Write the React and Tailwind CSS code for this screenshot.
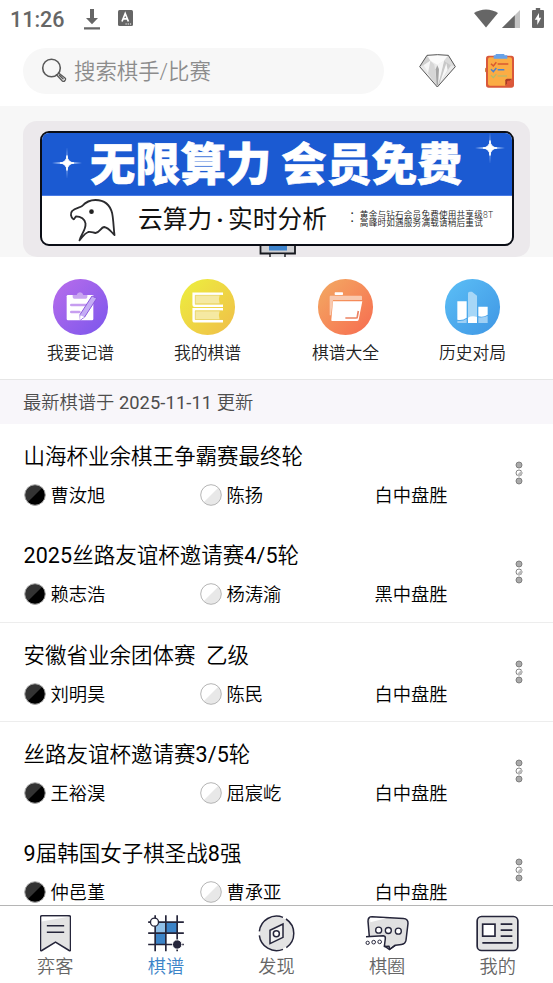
import React from 'react';

const games = [
  { title: '山海杯业余棋王争霸赛最终轮', black: '曹汝旭', white: '陈扬', result: '白中盘胜', line: false },
  { title: '2025丝路友谊杯邀请赛4/5轮', black: '赖志浩', white: '杨涛渝', result: '黑中盘胜', line: true },
  { title: '安徽省业余团体赛  乙级', black: '刘明昊', white: '陈民', result: '白中盘胜', line: true },
  { title: '丝路友谊杯邀请赛3/5轮', black: '王裕淏', white: '屈宸屹', result: '白中盘胜', line: false },
  { title: '9届韩国女子棋圣战8强', black: '仲邑堇', white: '曹承亚', result: '白中盘胜', line: false },
];

// Digits keep the regular weight, Chinese text uses the lighter one
const MixedText = ({ text }) =>
  text.split(/([\d/-]+)/).map((part, i) =>
    i % 2 ? <span key={i} className="font-normal tracking-[0.1px]">{part}</span> : part
  );

const StatusBar = () => (
  <div className="h-[38px] shrink-0 flex items-center justify-between pl-[10px] pr-[9px] text-[#666]">
    <div className="flex items-center">
      <span className="w-[54px] pt-px text-[21.5px] leading-none font-medium whitespace-nowrap">11:26</span>
      <svg className="ml-5 w-4 h-[21px]" viewBox="0 0 16 21" fill="currentColor">
        <path d="M6 0h4v9h4l-6 6.2L2 9h4zM0 18.2h16v2.2H0z" />
      </svg>
      <svg className="ml-[18px] -mt-[2px] w-[15px] h-4" viewBox="0 0 15 16">
        <rect width="15" height="16" rx="1.5" fill="#666" />
        <path d="M4 11.5 7.2 3.5 10.4 11.5M5 8.9h4.4" fill="none" stroke="#fff" strokeWidth="1.7" />
        <path d="M7.5 14h1.2M9.7 14h1.2M11.9 14h1.2" stroke="#fff" strokeWidth="1" />
      </svg>
    </div>
    <div className="flex items-center">
      <svg className="w-6 h-[19px] -mt-[2px]" viewBox="0 0 24 19">
        <path d="M12 18.5 0 4C7-.8 17-.8 24 4z" fill="#666" />
      </svg>
      <svg className="ml-1 w-[18px] h-[18px]" viewBox="0 0 18 18">
        <path d="M18 0v18H0z" fill="#c3c3c3" />
        <path d="M12.8 5.2V18H0z" fill="#666" />
      </svg>
      <svg className="ml-3 -mt-[2px] w-3 h-5" viewBox="0 0 12 20">
        <path d="M1 2h2.8V0h4.4v2H11a1 1 0 0 1 1 1v16a1 1 0 0 1-1 1H1a1 1 0 0 1-1-1V3a1 1 0 0 1 1-1z" fill="#666" />
        <path d="M7 5 2.8 11.8h2.5V17L9.2 9.8H7z" fill="#fff" />
      </svg>
    </div>
  </div>
);

const DiamondIcon = () => (
  <svg className="w-[37px] h-[34px]" viewBox="0 0 111 102">
    <path d="M24 4 56 2 88 4 109 38 55 99 2 38z" fill="#e9e9e9" />
    <path d="M24 4 56 2 88 4 75 20 55 32 34 20z" fill="#fbfbfb" />
    <path d="M24 4 34 20 14 34 2 38z" fill="#d0d0d0" />
    <path d="M88 4 75 20 96 34 109 38z" fill="#dadada" />
    <path d="M14 34 34 20 55 99z" fill="#f6f6f6" />
    <path d="M34 20 46 32 55 99 27 58z" fill="#d6d6d6" />
    <path d="M75 20 96 34 55 99z" fill="#c8c8c8" />
    <path d="M55 32 75 20 66 60 55 99z" fill="#f5f5f5" />
    <path d="M50 46 55 34 60 46 57 94H53z" fill="#a5a5a5" />
    <path d="M82 28 86 48 61 91z" fill="#f7f7f7" />
    <path d="M24 4 56 2 88 4 109 38 55 99 2 38z" fill="none" stroke="#555" strokeWidth="3" />
  </svg>
);

const ChecklistIcon = () => (
  <svg className="w-[30px] h-[34px]" viewBox="0 0 90 102">
    <rect x="0" y="41" width="8" height="14" rx="3" fill="#c98a45" />
    <rect x="3" y="5" width="84" height="96" rx="8" fill="#d9583a" />
    <path d="M15 10h60a6 6 0 0 1 6 6v58L61 95H15a6 6 0 0 1-6-6V16a6 6 0 0 1 6-6z" fill="#fbac44" />
    <path d="M61 95V79q0-5 5-5h15z" fill="#a93a26" />
    <path d="M66 95V84q0-4 4-4h11v11z" fill="#e0593a" />
    <path d="M26 4h6V0h26v4h9v10H26z" fill="#67a2e8" />
    <path d="M18 29l7 7 9-11M38 30h32" fill="none" stroke="#d95a31" strokeWidth="4.5" />
    <path d="M18 46l7 7 9-11M38 47h20" fill="none" stroke="#4c82cd" strokeWidth="4.5" />
    <path d="M18 64l7 7 9-11M38 66h28" fill="none" stroke="#a8bd72" strokeWidth="3.5" />
  </svg>
);

const SearchBar = () => (
  <div className="h-[68px] shrink-0 flex items-center px-[23px] pb-[2px]">
    <div className="w-[361px] h-[46px] rounded-full bg-[#f7f7f7] flex items-center pl-[18px] -mt-px">
      <svg className="w-[26px] h-[25px]" viewBox="0 0 26 25" fill="none" stroke="#595959">
        <circle cx="10.5" cy="10" r="8.8" strokeWidth="1.6" />
        <path d="M15 16.3 21.3 23q1.5 1 2.7-.5t0-2.5L17 14.4M18 17l4.5 4.3" strokeWidth="1.3" />
      </svg>
      <span className="ml-[7px] pt-[2px] text-[21.4px] leading-[30px] text-[#8c8c8c]">搜索棋手/比赛</span>
    </div>
    <div className="ml-[35px] flex items-center gap-[29px]">
      <DiamondIcon />
      <ChecklistIcon />
    </div>
  </div>
);

const Sparkle = ({ className }) => (
  <svg className={className} viewBox="0 0 30 32">
    <path d="M15 0 15.7 14.6 30 16 15.7 17.4 15 32 14.3 17.4 0 16 14.3 14.6z" fill="#a8c4f5" />
    <path d="M15 8.5Q15.5 15.5 22 16Q15.5 16.5 15 23.5Q14.5 16.5 8 16Q14.5 15.5 15 8.5z" fill="#fff" stroke="#fff" />
  </svg>
);

const Banner = () => (
  <div className="h-[151px] shrink-0 bg-[#f7f7f7] px-[23px] pt-[15px]">
    <div className="h-[136px] rounded-[14px] bg-[#ece9ec] overflow-hidden px-[17px] pt-[10px] relative">
      {/* pedestal under the card */}
      <svg className="absolute left-[236px] top-[123px] w-[38px] h-[13px]" viewBox="0 0 38 13">
        <path d="M1.5 0v9.5H36V0" fill="#cfcfd2" stroke="#17191f" strokeWidth="1.8" />
        <path d="M11 10.3V14h15v-3.7z" fill="#e4e4e6" />
        <path d="M11 10v4M26 10v4" stroke="#17191f" strokeWidth="1.4" />
        <path d="M10 2h18v4.5H10z" fill="#3c83cc" />
      </svg>
      <div className="relative w-[474px] h-[115px] rounded-[9px] border-2 border-[#0b0e16] bg-white overflow-hidden">
        <div className="relative h-[63px] bg-[#1b5ad2] border-b border-[#4a7ce6]">
          <Sparkle className="absolute left-[10px] top-[14px] w-[30px] h-8" />
          <Sparkle className="absolute right-[6px] -top-px w-[32px] h-8" />
          <div className="flex pl-[48px] pt-[2px] gap-[10px] text-[45.3px] leading-[62px] font-black text-white whitespace-nowrap [-webkit-text-stroke:0.6px_#fff]">
            <span>无限算力</span>
            <span>会员免费</span>
          </div>
        </div>
        <div className="flex">
          <svg className="ml-[27px] mt-[2px] w-[47px] h-11 shrink-0" viewBox="205 276 140 132">
            <path
              d="M236 403C240 385 256 372 254 352C252 340 240 331 226 331C222 333 222 340 218 340C209 334 208 321 214 315C222 306 236 305 244 300C254 289 268 282 284 282C312 282 328 298 334 322C338 342 338 364 341 387C332 380 326 366 310 363C300 364 296 380 284 381C276 380 272 376 262 378C250 382 246 392 236 403Z"
              fill="none" stroke="#2b2b2e" strokeWidth="5.5" strokeLinejoin="round"
            />
            <circle cx="272" cy="317" r="7" fill="#222" />
          </svg>
          <div className="ml-[22px] mt-[6px] flex text-[24.7px] leading-9 text-[#111] font-normal whitespace-nowrap">
            <span>云算力</span>
            <span className="w-[16px] text-center font-bold">·</span>
            <span>实时分析</span>
          </div>
          <div className="ml-6 mt-[15px] text-[8.6px] leading-[8.4px] tracking-[0.2px] text-[#222] whitespace-nowrap">
            <div className="flex"><span className="w-[9px] -mt-[2px]">•</span>黄金与钻石会员免费使用共享级8T</div>
            <div className="flex"><span className="w-[9px] -mt-[2px]">•</span>高峰时如遇服务满载请稍后重试</div>
          </div>
        </div>
      </div>
    </div>
  </div>
);

const RecordIcon = () => (
  <svg className="w-[33px] h-[33px]" viewBox="0 0 99 99">
    <path d="M12 12h76v72a4 4 0 0 1-4 4H12a4 4 0 0 1-4-4V16a4 4 0 0 1 4-4z" fill="#fff" />
    <path d="M26 12h12q2-8 10-8t10 8h12v6q0 5-5 5H31q-5 0-5-5z" fill="#c9a5f1" />
    <path d="M22 42h46M22 63h24" stroke="#c79ef0" strokeWidth="8" strokeLinecap="round" />
    <path d="M84 15 98 22 62 78 49 87 48 71z" fill="#c5adf5" stroke="#8a58dd" strokeWidth="3" />
    <path d="M49 73 48 87 61 78z" fill="#fff" />
  </svg>
);

const BooksIcon = () => (
  <svg className="w-[33px] h-[33px]" viewBox="0 0 99 99">
    <path d="M10 12h76q-5 13 0 26H10zM10 60h76q-5 12 0 26H10z" fill="#f5e9a2" />
    <path d="M96 8H8v34q0 2 3 2h85M96 55H8v34q0 2 3 2h85" fill="none" stroke="#fff" strokeWidth="7.5" />
    <path d="M13 13h81M13 38.5h81M13 60h81M13 85.5h81M13 13v25M13 60v25" fill="none" stroke="#e5cf58" strokeWidth="1.8" />
  </svg>
);

const FolderIcon = () => (
  <svg className="w-[34px] h-[33px]" viewBox="0 0 102 99">
    <rect x="17" y="4" width="25" height="8" rx="2" fill="#fff" />
    <path d="M4 14h92a3 3 0 0 1 3 3v10H12L6 73H2V18q0-4 2-4z" fill="#f9c9ae" />
    <path d="M12 31h88L89 86q-1 4-5 4H10q-4 0-3-4z" fill="#fff" />
    <path d="M49 81h32q4 0 4-4l3-17" fill="none" stroke="#ec8262" strokeWidth="5" />
  </svg>
);

const HistoryIcon = () => (
  <svg className="w-[31px] h-[33px]" viewBox="0 0 93 99">
    <path d="M33 7q0-5 5-5h7l15 12v80H33z" fill="#a7d7f7" />
    <path d="M1 31h28v49q-12 9-28 6zM64 47h28v24q-12 9-28 5z" fill="#fff" />
    <path d="M1 89q16 3 28-6v13H1zM64 79q16 2 28-5v22H64z" fill="#9fd0f5" />
    <path d="M33 80q12-7 27-2v18H33z" fill="#fff" />
  </svg>
);

const menu = [
  [
    { label: '我要记谱', icon: RecordIcon, bg: 'bg-linear-to-br from-[#b96ceb] to-[#7b55ec]' },
    { label: '我的棋谱', icon: BooksIcon, bg: 'bg-linear-to-br from-[#ecf03c] to-[#efbd49]' },
  ],
  [
    { label: '棋谱大全', icon: FolderIcon, bg: 'bg-linear-to-br from-[#f2aa63] to-[#f66a50]' },
    { label: '历史对局', icon: HistoryIcon, bg: 'bg-linear-to-br from-[#5cbff6] to-[#3f96e4]' },
  ],
];

const Menu = () => (
  <div className="h-[123px] shrink-0 flex justify-between px-[17px] pt-[22px] border-b border-[#e6e6e6]">
    {menu.map((group, i) => (
      <div key={i} className="flex">
        {group.map(({ label, icon: Icon, bg }) => (
          <div key={label} className="w-[127px] flex flex-col items-center">
            <div className={`w-[55px] h-[56px] rounded-full flex items-center justify-center ${bg}`}>
              <Icon />
            </div>
            <span className="mt-[6px] text-[16.8px] leading-6 text-[#222]">{label}</span>
          </div>
        ))}
      </div>
    ))}
  </div>
);

const Stone = ({ dark }) => (
  <svg className="-mt-px w-[22px] h-[22px] shrink-0" viewBox="0 0 22 22">
    <circle cx="11" cy="11" r="10.3" fill={dark ? '#333' : '#fff'} />
    <path d="M18.3 3.7A10.3 10.3 0 0 1 3.7 18.3z" fill={dark ? '#000' : '#e8e8e8'} />
    <circle cx="11" cy="11" r="10.3" fill="none" stroke={dark ? '#aaa' : '#b5b5b5'} strokeWidth="1" />
  </svg>
);

const MoreIcon = () => (
  <svg className="w-2 h-6 shrink-0" viewBox="0 0 8 24" stroke="#777" strokeWidth="0.9">
    <circle cx="4" cy="4" r="3" fill="#aaa" />
    <circle cx="4" cy="12" r="3" fill="#fff" />
    <path d="M6.2 9.8A3 3 0 0 1 1.8 14.2z" fill="#bbb" stroke="none" />
    <circle cx="4" cy="20" r="3" fill="#aaa" />
  </svg>
);

const GameRow = ({ game }) => (
  <div className={`h-[99.3px] shrink-0 flex justify-between pl-[23.5px] pr-[30.5px] border-b ${game.line ? 'border-[#ededed]' : 'border-transparent'}`}>
    <div className="flex flex-col">
      <span className="mt-[17px] text-[21.5px] leading-8 whitespace-pre text-black">
        <MixedText text={game.title} />
      </span>
      <div className="mt-[10px] flex text-[18.3px] leading-6 text-black">
        <div className="w-44 flex items-center gap-[5px]">
          <Stone dark />
          <span className="pt-px">{game.black}</span>
        </div>
        <div className="w-44 flex items-center gap-[5px]">
          <Stone />
          <span className="pt-px">{game.white}</span>
        </div>
        <span className="pt-px -ml-px">{game.result}</span>
      </div>
    </div>
    <div className="pt-[37px]">
      <MoreIcon />
    </div>
  </div>
);

const BookmarkIcon = () => (
  <svg className="w-[31px] h-[37px]" viewBox="119.5 254.5 93 111">
    <path d="M125 257h82q4 0 4 4v98q0 4-4 2L166 336 125 361q-4 2-4-2V261q0-4 4-4z" fill="#e3e3e3" stroke="#25253a" strokeWidth="4.5" />
    <path d="M125 260h80L125 274z" fill="#fff" />
    <path d="M140 287h52M140 306h52" stroke="#25253a" strokeWidth="4.5" />
  </svg>
);

const BoardIcon = () => (
  <svg className="w-9 h-[37px]" viewBox="443.5 254.5 108 111">
    <path d="M465 276h32v33h-32z" fill="#90c0e8" />
    <path d="M497 276h34v33h-34zM465 309h32v34h-32z" fill="#3c84c8" />
    <path d="M465 255v108M497 255v108M531 255v108M444 276h107M444 309h107M444 343h107" stroke="#25253a" strokeWidth="5" />
    <circle cx="463" cy="276" r="12" fill="#fff" stroke="#25253a" strokeWidth="4" />
    <circle cx="531" cy="343" r="14" fill="#25253a" stroke="#fff" strokeWidth="3" />
  </svg>
);

const CompassIcon = () => (
  <svg className="w-[37px] h-[37px]" viewBox="0 0 111 111" fill="none" stroke="#25253a" strokeWidth="4.5">
    <circle cx="55" cy="55" r="50" fill="#e3e3e3" stroke="none" />
    <path d="M4 49A52 52 0 0 1 75 7M84 12A52 52 0 0 1 85 98M75 103A52 52 0 0 1 4 61" />
    <path d="M75 27V67L36 86V46z" fill="#f1f1f1" />
    <circle cx="55" cy="56" r="9" fill="#fff" />
  </svg>
);

const ChatIcon = () => (
  <svg className="w-[44px] h-[37px]" viewBox="267 254.5 132 111" stroke="#25253a" strokeWidth="4.5" strokeLinejoin="round">
    <path d="M288 260 382 265Q397 266 396 280L390 330Q388 342 376 343L359 345 340 358 325 347 280 320 276 273Q276 260 288 260z" fill="#e1e1e1" />
    <path d="M282 263 330 264 283 276z" fill="#fff" stroke="none" />
    <path d="M269 320 324 317Q330 318 328 325L326 351 318 349H267" fill="#fff" stroke="none" />
    <path d="M270 320 322 317Q329 318 328 325L325 349 339 348 341 358 358 345" fill="none" />
    <g fill="#fff" strokeWidth="4">
      <circle cx="308" cy="300" r="9" />
      <circle cx="337" cy="301" r="9" />
      <circle cx="367" cy="303" r="9" />
    </g>
    <g fill="#fff" strokeWidth="3">
      <circle cx="275" cy="338" r="5" />
      <circle cx="293" cy="336" r="5.5" />
      <circle cx="311" cy="335" r="5.5" />
    </g>
  </svg>
);

const ProfileIcon = () => (
  <svg className="w-[43px] h-[37px]" viewBox="598 254.5 129 111" fill="none" stroke="#25253a" strokeWidth="5">
    <rect x="601.5" y="259" width="122" height="102" rx="13" fill="#e3e3e3" />
    <rect x="618" y="282" width="37" height="36" fill="#fff" />
    <path d="M672 282h35M672 300h35M672 318h35M617 338h91" />
  </svg>
);

const tabs = [
  { label: '弈客', icon: BookmarkIcon },
  { label: '棋谱', icon: BoardIcon, active: true },
  { label: '发现', icon: CompassIcon },
  { label: '棋圈', icon: ChatIcon },
  { label: '我的', icon: ProfileIcon },
];

const TabBar = () => (
  <div className="h-[78px] shrink-0 grid grid-cols-5 border-t border-[#b5b5b5] bg-white">
    {tabs.map(({ label, icon: Icon, active }) => (
      <div key={label} className="flex flex-col items-center pt-[9px]">
        <Icon />
        <span className={`mt-[3px] text-[18.2px] leading-6 ${active ? 'text-[#3c84c8]' : 'text-[#666]'}`}>{label}</span>
      </div>
    ))}
  </div>
);

export default function App() {
  return (
    <div className="w-[553px] h-[983px] flex flex-col overflow-hidden bg-white font-[350] font-[Roboto,'Noto_Sans_CJK_SC',sans-serif]">
      <StatusBar />
      <SearchBar />
      <Banner />
      <Menu />
      <div className="h-11 shrink-0 flex items-center px-[23px] pt-[2px] bg-[#f8f6fa] text-[18.3px] text-[#4d4d4d]">
        <span><MixedText text="最新棋谱于 2025-11-11 更新" /></span>
      </div>
      <div className="flex-1 min-h-0 flex flex-col overflow-hidden">
        {games.map((game) => (
          <GameRow key={game.title} game={game} />
        ))}
      </div>
      <TabBar />
    </div>
  );
}
